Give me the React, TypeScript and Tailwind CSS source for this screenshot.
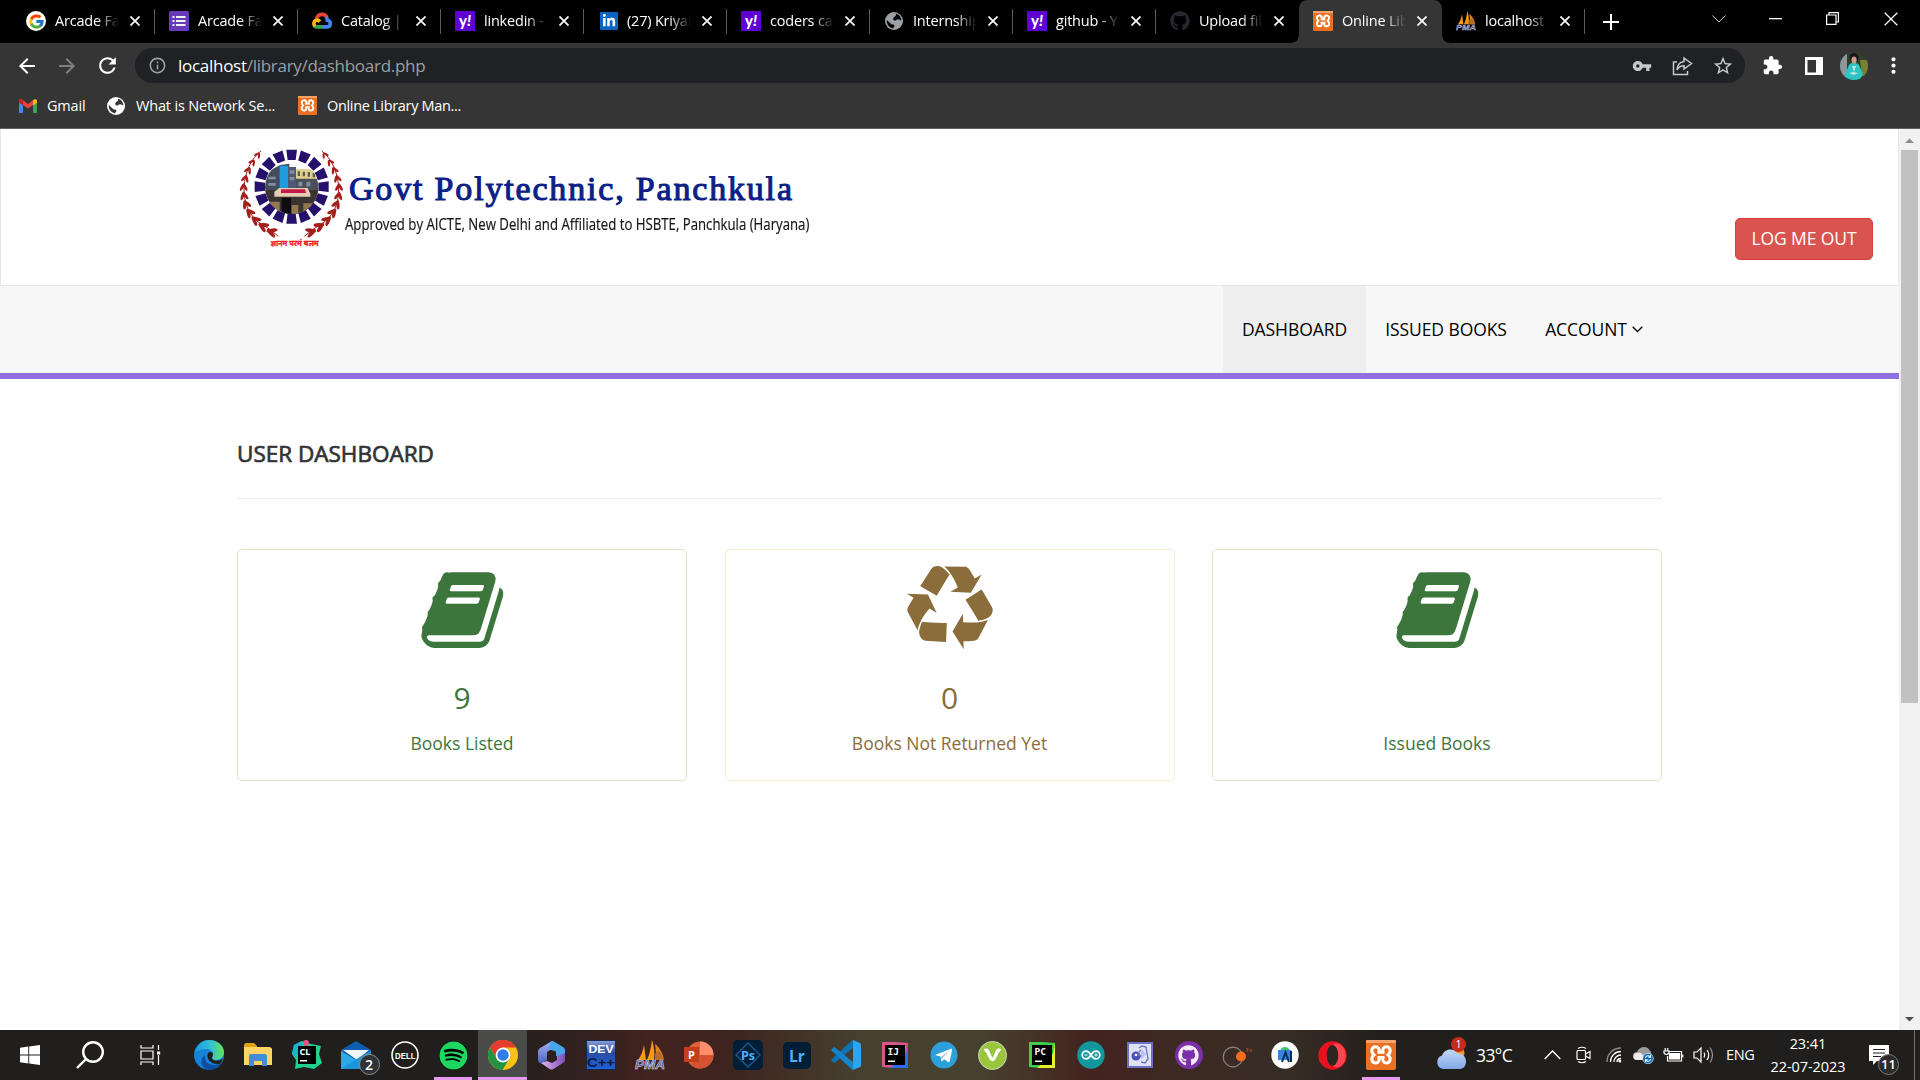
import React, { type ReactNode } from "react";
import {
  MdArrowBack,
  MdArrowForward,
  MdRefresh,
  MdInfoOutline,
  MdVpnKey,
  MdStarBorder,
  MdExtension,
  MdMoreVert,
} from "react-icons/md";
import { FaGithub, FaLinkedinIn, FaSpotify } from "react-icons/fa";
import { FcGoogle } from "react-icons/fc";

/* ---------- shared drawings ---------- */

function Xampp({ size }: { size: number }) {
  return (
    <svg width={size} height={size} viewBox="0 0 30 30">
      <rect width="30" height="30" rx="2" fill="#ea7023" />
      <rect width="30" height="3" rx="1" fill="#f6a36e" />
      <g fill="none" stroke="#fff" strokeWidth="3">
        <path d="M13 12.500C14 8.500 12 6.700 9.800 6.700 5.500 6.700 4.300 11.500 8 14.800 4.300 18 5.500 23 9.800 23c2.200 0 4.200-2 3.200-6" />
        <path d="M17 12.500C16 8.500 18 6.700 20.200 6.700c4.300 0 5.500 4.800 1.800 8.100 3.700 3.200 2.500 8.200-1.800 8.200-2.200 0-4.200-2-3.200-6" />
        <path d="M11.500 12.500h7M11.500 17.300h7" strokeWidth="2.600" />
      </g>
    </svg>
  );
}

function Globe({ size, color, land }: { size: number; color: string; land: string }) {
  return (
    <svg width={size} height={size} viewBox="0 0 20 20">
      <circle cx="10" cy="10" r="10" fill={color} />
      <path d="M12 1.800c3.800 1 6 4.200 6.200 7.700-1.700-.2-2.200-1.500-3.700-1.500-1.800 0-2 1.500-3.500 1.500S8.500 8 9.500 6.500 13 5 12 1.800zM2 9l5 4.500c1.500.5 3.500 0 3.500 1.700 0 1.300-1.500 1.300-1.300 3C5 18 1.500 14 2 9z" fill={land} />
    </svg>
  );
}

function Pma({ size }: { size: number }) {
  return (
    <svg width={size} height={size} viewBox="0 0 30 30">
      <path d="M3 20c3-4 5-9 6-15l2 15zM12 20c3-7 4-13 5-20 2 6 3 13 2 20z" fill="#f89c0e" />
      <path d="M20 20c1-5 1-10 0-16 5 4 8 10 9 16z" fill="#e0801d" />
      <path d="M20 14l3-3 3 2 3 7h-9z" fill="#b86b2b" />
      <text x="0" y="29" textLength="30" lengthAdjust="spacingAndGlyphs" fontSize="12" fontWeight="700" fontStyle="italic" fontFamily="Liberation Sans, sans-serif" fill="#4f5c98" stroke="#d9dcf0" strokeWidth="0.500">
        PMA
      </text>
    </svg>
  );
}

function Yahoo() {
  return (
    <span className="flex h-5 w-5 items-center justify-center bg-[#5f01d1] pb-0.5 font-['Lato',sans-serif] text-[15px] font-black leading-none text-white">
      <span>y</span>
      <span className="italic">!</span>
    </span>
  );
}

function FormsIcon() {
  return (
    <svg width="20" height="20" viewBox="0 0 20 20">
      <rect width="20" height="20" rx="1.500" fill="#673ab7" />
      <path d="M3.500 5h2v2h-2zM7 5h9.500v2H7zM3.500 9h2v2h-2zM7 9h9.500v2H7zM3.500 13h2v2h-2zM7 13h9.500v2H7z" fill="#f1f1f1" />
    </svg>
  );
}

function CloudIcon() {
  return (
    <svg width="20" height="20" viewBox="0 0 20 20" fill="none" strokeWidth="3.600">
      <path d="M4.500 8C5.500 4.500 8 3.400 10 3.400c2 0 4 1 5 3.200" stroke="#ea4335" />
      <path d="M14 6c1 1 1.300 2 1.300 3.200 2 .4 3 1.800 3 3.300 0 2-1.300 3.400-3.500 3.400H10" stroke="#4285f4" />
      <path d="M10.500 15.900H5.200c-1 0-2-.4-2.600-1" stroke="#34a853" />
      <path d="M3 15.200C1.400 13.500 1.400 11 3.500 9.600 5 8.800 6.800 9.200 7.800 10.600" stroke="#fbbc05" />
    </svg>
  );
}

function Badge({ className, children }: { className: string; children: ReactNode }) {
  return (
    <span className={`absolute flex items-center justify-center rounded-full leading-none ${className}`}>{children}</span>
  );
}

/* ---------- browser tabs ---------- */

type TabData = { icon: ReactNode; title: string; active?: boolean };

const tabs: TabData[] = [
  { icon: <span className="flex h-5 w-5 items-center justify-center rounded-full bg-white"><FcGoogle size={17} /></span>, title: "Arcade Facilitator" },
  { icon: <FormsIcon />, title: "Arcade Facilitator" },
  { icon: <CloudIcon />, title: "Catalog | Google" },
  { icon: <Yahoo />, title: "linkedin - Yahoo" },
  { icon: <span className="ml-0.5 flex h-[18px] w-[18px] items-center justify-center rounded-[1px] bg-[#0a66c2] text-white"><FaLinkedinIn size={14} /></span>, title: "(27) Kriyanshi" },
  { icon: <Yahoo />, title: "coders cave" },
  { icon: <Globe size={18} color="#9aa0a6" land="#000" />, title: "Internship" },
  { icon: <Yahoo />, title: "github - Yahoo" },
  { icon: <FaGithub size={20} className="text-[#24292f]" />, title: "Upload files" },
  { icon: <Xampp size={20} />, title: "Online Library", active: true },
  { icon: <Pma size={20} />, title: "localhost / " },
];

function Cross({ size, width }: { size: number; width: number }) {
  return (
    <svg width={size} height={size} viewBox="0 0 10 10" stroke="#fff" strokeWidth={width}>
      <path d="M.5.5l9 9M9.500.5l-9 9" />
    </svg>
  );
}

function Tab({ tab, divider }: { tab: TabData; divider: boolean }) {
  return (
    <div className="relative flex h-[43px] w-[143px] shrink-0 items-center">
      {tab.active && (
        <svg className="absolute -left-2.5 top-0" width="163" height="43" viewBox="0 0 163 43">
          <path d="M0 43c7 0 10-3 10-10V10C10 3 13 0 20 0h123c7 0 10 3 10 10v23c0 7 3 10 10 10z" fill="#353535" />
        </svg>
      )}
      <div className="relative flex w-full items-center pb-px pl-[14px]">
        <div className="flex h-5 w-5 shrink-0 items-center justify-center">{tab.icon}</div>
        <div className="ml-[9px] h-6 w-[64px] overflow-hidden whitespace-nowrap text-[14.500px] leading-6 tracking-[-0.200px] text-white [mask-image:linear-gradient(to_right,#000_66%,transparent)]">
          {tab.title}
        </div>
        <div className="ml-[11px] flex">
          <Cross size={10} width={1.700} />
        </div>
      </div>
      {divider && <div className="absolute right-0 top-[9px] h-[25px] w-px bg-[#5a5a5a]" />}
    </div>
  );
}

function TabStrip() {
  return (
    <div className="flex h-[43px] items-center bg-black pl-3">
      {tabs.map((t, i) => (
        <Tab key={i} tab={t} divider={!t.active && !tabs[i + 1]?.active} />
      ))}
      <svg className="ml-[18px]" width="16" height="16" viewBox="0 0 16 16" stroke="#fff" strokeWidth="2">
        <path d="M8 0v16M0 8h16" />
      </svg>
      <div className="ml-auto flex items-center pb-1.5 pr-[22px]">
        <svg width="14" height="8" viewBox="0 0 14 8" fill="none" stroke="#ccc">
          <path d="M.5.5L7 7 13.500.5" />
        </svg>
        <svg className="ml-[43px]" width="13" height="2" viewBox="0 0 13 2">
          <path d="M0 0h13v1.300H0z" fill="#fff" />
        </svg>
        <svg className="ml-[44px]" width="13" height="13" viewBox="0 0 13 13" fill="none" stroke="#fff" strokeWidth="1.200">
          <path d="M.6 3h9.400v9.400H.6zM3 3V.6h9.400V10H10" />
        </svg>
        <div className="ml-[45px] flex">
          <Cross size={14} width={0.900} />
        </div>
      </div>
    </div>
  );
}

function AddressBar() {
  return (
    <div className="flex h-[45px] items-center bg-[#353535] pl-[15px]">
      <MdArrowBack size={24} className="text-white" />
      <MdArrowForward size={24} className="ml-4 text-[#808080]" />
      <MdRefresh size={25} className="ml-4 text-white" />
      <div className="ml-[15px] flex h-[35px] w-[1610px] items-center rounded-full bg-[#202124] pl-[13px] pr-[11px]">
        <MdInfoOutline size={19} className="text-[#9aa0a6]" />
        <div className="ml-[11px] text-[17px] tracking-[-0.280px] text-[#9aa0a6]">
          <span className="text-white">localhost</span>/library/dashboard.php
        </div>
        <div className="ml-auto flex items-center text-[#c6c8ca]">
          <MdVpnKey size={20} />
          <svg className="ml-5" width="21" height="20" viewBox="0 0 21 20" fill="none" stroke="currentColor" strokeWidth="1.500">
            <path d="M5 6H1.500v12.500h14V15M12 2l7.500 5.500L12 13V9.800C9 9.800 6.500 11 5 14c.3-4.500 2.800-8 7-8.500z" />
          </svg>
          <MdStarBorder size={22} className="ml-[19px]" />
        </div>
      </div>
      <MdExtension size={21} className="ml-[17px] text-white" />
      <svg className="ml-[22px]" width="18" height="18" viewBox="0 0 18 18">
        <path fill="#fff" fillRule="evenodd" d="M0 0h18v18H0zM2.500 3v12.500H11V3z" />
      </svg>
      <svg className="ml-[17px] rounded-full" width="28" height="28" viewBox="0 0 28 28">
        <rect width="28" height="28" fill="#30402a" />
        <path d="M0 0h7v28H0z" fill="#8f979a" />
        <path d="M20 8h8v16h-6z" fill="#77812f" />
        <path d="M9 13c2-3 8-3 10 0l4 9-3 6H6l-1-6z" fill="#2cc4c4" />
        <path d="M12 14l2 6 2-6zM9 21l4-1 5 1-4 2z" fill="#bfe8df" />
        <ellipse cx="14" cy="6" rx="4.500" ry="5" fill="#17161a" />
        <ellipse cx="14" cy="8" rx="2.600" ry="3.600" fill="#d09a82" />
      </svg>
      <MdMoreVert size={25} className="ml-[13px] text-white" />
    </div>
  );
}

function Bookmarks() {
  return (
    <div className="flex h-[41px] items-center border-b border-[#5f6163] bg-[#353535] pb-[5px] pl-[19px] text-[14.500px] tracking-[-0.200px] text-white">
      <svg width="18" height="14" viewBox="0 0 18 14">
        <path d="M0 2v12h4V5.500z" fill="#4285f4" />
        <path d="M18 2v12h-4V5.500z" fill="#34a853" />
        <path d="M0 1.500C0 .5 1.500-.5 3 .6L9 5l6-4.400L14 6 9 9.500 4 6z" fill="#ea4335" />
        <path d="M14 1.300C16-.5 18 .3 18 2v1.500L14 6.500z" fill="#fbbc04" />
        <path d="M0 2C0 .5 2-.4 4 1.300v5.200L0 3.500z" fill="#c5221f" />
      </svg>
      <span className="ml-2.5 w-[38px]">Gmail</span>
      <span className="ml-[22px]">
        <Globe size={18} color="#fff" land="#353535" />
      </span>
      <span className="ml-[11px] w-[142px] whitespace-nowrap tracking-[-0.160px]">What is Network Se...</span>
      <span className="ml-5">
        <Xampp size={19} />
      </span>
      <span className="ml-[10px] tracking-[-0.320px]">Online Library Man...</span>
    </div>
  );
}

/* ---------- library page ---------- */

const leafPoints = [
  [66, 34, -55], [50, 56, -55], [38, 80, -65], [30, 105, -75], [26, 131, -90],
  [28, 157, -100], [35, 182, -115], [47, 206, -130], [65, 228, -140], [88, 246, -150], [114, 262, -160],
];

function Laurel() {
  return (
    <g fill="#a5201c">
      {leafPoints.map(([x, y, a], i) => (
        <g key={i} transform={`translate(${x} ${y}) rotate(${a})`}>
          <ellipse cx="2" cy="-6" rx={9 + i * 0.8} ry={3.2 + i * 0.28} transform="rotate(28)" />
          <ellipse cx="2" cy="6" rx={9 + i * 0.8} ry={3.2 + i * 0.28} transform="rotate(-28)" />
        </g>
      ))}
      <path d="M78 18C20 60 0 190 80 238q30 16 50 36" fill="none" stroke="#a5201c" strokeWidth="3" />
    </g>
  );
}

function Crest() {
  return (
    <svg className="ml-[-2px] mt-[16px] shrink-0" width="115" height="105" viewBox="0 0 345 315">
      <clipPath id="crest-disc">
        <circle cx="170" cy="127" r="80" />
      </clipPath>
      {Array.from({ length: 16 }, (_, i) => (
        <path key={i} d="M154 14h32l-4 31h-24z" fill="#25106b" transform={`rotate(${i * 22.5} 170 125)`} />
      ))}
      <g clipPath="url(#crest-disc)">
        <rect x="88" y="40" width="165" height="170" fill="#fff" />
        <path d="M90 85l45-25 28-4v80H90z" fill="#454c59" />
        <path d="M134 62h25v70h-25z" fill="#239be0" />
        <path d="M159 66h24v64h-24z" fill="#4e5a73" />
        <path d="M183 72h72v30h-72z" fill="#e0cf91" />
        <path d="M183 101h72v110h-72z" fill="#4b4f58" />
        <path d="M188 79h7v14h-7zM203 80h7v14h-7zM218 81h7v14h-7zM233 83h7v14h-7z" fill="#59604d" />
        <path d="M164 76h14v10h-14zM164 96h14v10h-14zM190 110h12v14h-12zM214 110h12v14h-12zM100 95h22v8h-22zM100 114h22v8h-22z" fill="#818da3" />
        <path d="M88 135h167v80H88z" fill="#3a3331" />
        <path d="M118 140l15-11h85l8 17v9H118z" fill="#e5cdb3" />
        <path d="M138 133h72l3 11h-75z" fill="#c21948" />
        <path d="M100 170h34v36h-34zM170 180h20v26h-20zM205 175h30v30h-30z" fill="#94784f" />
        <path d="M140 158h28v50h-28z" fill="#0d0d10" />
      </g>
      <Laurel />
      <g transform="translate(338 0) scale(-1 1)">
        <Laurel />
      </g>
      <text x="107" y="304" textLength="144" lengthAdjust="spacingAndGlyphs" fontSize="23" fontWeight="700" fontFamily="'Noto Sans Devanagari', 'Noto Sans', sans-serif" fill="#f01820" stroke="#f01820" strokeWidth="0.800">
        ज्ञानम परमं बलम
      </text>
    </svg>
  );
}

function SiteHeader() {
  return (
    <header className="flex h-[157px] justify-between border border-t-0 border-[#e7e7e7] bg-white">
      <div className="flex pl-[236px]">
        <Crest />
        <div className="pt-[38px]">
          <div className="ml-[-1px] whitespace-nowrap font-['Liberation_Serif',serif] text-[34px] leading-[44px] tracking-[1.820px] text-[#0c1f85] [-webkit-text-stroke:1.100px_#0c1f85]">
            Govt Polytechnic, Panchkula
          </div>
          <div className="ml-[-5px] mt-px w-[580px] origin-left scale-x-[0.852] whitespace-nowrap text-[15.500px] leading-6 text-[#161616] [-webkit-text-stroke:0.200px_#161616]">
            Approved by AICTE, New Delhi and Affiliated to HSBTE, Panchkula (Haryana)
          </div>
        </div>
      </div>
      <button className="mr-[25px] mt-[89px] h-[42px] w-[138px] rounded-[5px] border border-[#d43f3a] bg-[#d9534f] text-[17.500px] leading-none tracking-[-0.100px] text-white">
        LOG ME OUT
      </button>
    </header>
  );
}

function MainMenu() {
  return (
    <nav className="flex h-[93px] justify-end border-b-[6px] border-[#9170e4] bg-[#f7f7f7] pr-[237px] text-[17.500px] tracking-[-0.080px] text-black">
      <a className="flex w-[143px] items-center justify-center bg-[#eee]">DASHBOARD</a>
      <a className="flex w-[160px] items-center justify-center">ISSUED BOOKS</a>
      <a className="flex w-[136px] items-center justify-center">
        ACCOUNT
        <svg className="ml-[5px]" width="11" height="7" viewBox="0 0 11 7" fill="none" stroke="#000" strokeWidth="1.300">
          <path d="M.7.7l4.800 4.800L10.300.7" />
        </svg>
      </a>
    </nav>
  );
}

const bookPath =
  "M1703 478q40 57 18 129l-275 906q-19 64-76.500 107.500t-122.500 43.500h-923q-77 0-148.500-53.500t-99.500-131.500q-24-67-2-127 0-4 3-27t4-37q1-8-3-21.500t-3-19.500q2-11 8-21t16.500-23.500 16.500-23.500q23-38 45-91.500t30-91.500q3-10 .5-30t-.5-28q3-11 17-28t17-23q21-36 42-92t25-90q1-9-2.500-32t.5-28q4-13 22-30.500t22-22.500q19-26 42.500-84.500t27.500-96.500q1-8-3-25.500t-2-26.500q2-8 9-18t18-23 17-21q8-12 16.500-30.500t15-35 16-36 19.500-32 26.500-23.500 36-11.500 47.500 5.500l-1 3q38-9 51-9h761q74 0 114 56t18 130l-274 906q-36 119-71.500 153.500t-128.500 34.500h-869q-27 0-38 15-11 16-1 43 24 70 144 70h923q29 0 56-15.500t35-41.500l300-987q7-22 5-57 38 15 59 43zm-1064 2q-4 13 2 22.500t20 9.500h608q13 0 25.500-9.500t16.500-22.500l21-64q4-13-2-22.500t-20-9.500h-608q-13 0-25.500 9.500t-16.500 22.500zm-83 256q-4 13 2 22.500t20 9.500h608q13 0 25.500-9.500t16.500-22.500l21-64q4-13-2-22.500t-20-9.500h-608q-13 0-25.500 9.500t-16.500 22.500z";

const recyclePath =
  "M836 1169l-15 368-2 22-420-29q-36-3-67-31.500t-47-65.500q-11-27-14.500-55t4-65 12-55 21.500-64 19-53q78 12 509 28zm-387-586l180 379-147-92q-63 72-111.500 144.500t-72.500 125-39.500 94.500-18.500 63l-4 21-190-357q-17-26-18-56t6-47l8-18q35-63 114-188l-140-86zm1231 517l-188 359q-12 29-36.500 46.500t-43.500 20.500l-18 4q-71 7-219 12l8 164-230-367 211-362 7 173q170 16 283 5t170-33zm-785-924q-47 63-265 435l-317-187-19-12 225-356q20-31 60-45t80-10q24 2 48.500 12t42 21 41.500 33 36 34.500 36 39.500 32 35zm655 307l212 363q18 37 12.500 76t-27.500 74q-13 20-33 37t-38 28-48.500 22-47 16-51.500 14-46 12q-34-72-265-436l313-195zm-143-226l142-83-220 373-419-20 151-86q-34-89-75-166t-75.500-123.500-64.500-80-47-46.500l-17-13 405 1q31-3 58 10.500t39 28.500l11 15q39 61 112 190z";

const book = { d: bookPath, viewBox: "-6 0 1776 1776" };
const recycle = { d: recyclePath, viewBox: "0 0 1792 1792" };

type CardProps = { tone: string; icon: { d: string; viewBox: string }; count: string; label: string };

function StatCard({ tone, icon, count, label }: CardProps) {
  return (
    <div className={`flex h-[232px] flex-col items-center rounded-[5px] border bg-white pt-[16px] ${tone}`}>
      <svg width="87.500" height="87.500" viewBox={icon.viewBox} fill="currentColor">
        <path d={icon.d} />
      </svg>
      <div className="mt-[24px] h-[40px] text-[30px] leading-[40px]">{count}</div>
      <div className="mt-[13px] text-[17.500px] leading-6">{label}</div>
    </div>
  );
}

function Dashboard() {
  return (
    <main className="px-[237px]">
      <h4 className="pt-[60px] text-[22.500px] leading-[30px] text-[#333] [-webkit-text-stroke:0.700px_#333]">USER DASHBOARD</h4>
      <hr className="mt-[29px] border-[#eee]" />
      <div className="mt-[50px] grid grid-cols-3 gap-[37.500px]">
        <StatCard tone="border-[#d6e9c6] text-[#3c763d]" icon={book} count="9" label="Books Listed" />
        <StatCard tone="border-[#faebcc] text-[#8a6d3b]" icon={recycle} count="0" label="Books Not Returned Yet" />
        <StatCard tone="border-[#d6e9c6] text-[#3c763d]" icon={book} count="" label="Issued Books" />
      </div>
    </main>
  );
}

function ScrollBar() {
  return (
    <div className="flex w-[21px] flex-col items-center justify-between bg-[#f1f1f1]">
      <svg width="21" height="21" viewBox="0 0 21 21">
        <path d="M6 14l4.500-4.500L15 14z" fill="#8b8b8b" />
      </svg>
      <div className="w-[17px] flex-1">
        <div className="h-[553px] bg-[#c1c1c1]" />
      </div>
      <svg width="21" height="21" viewBox="0 0 21 21">
        <path d="M6 8l4.500 4.500L15 8z" fill="#505050" />
      </svg>
    </div>
  );
}

/* ---------- taskbar ---------- */

function Jet({ label, a, b }: { label: string; a: string; b: string }) {
  return (
    <svg width="26" height="26" viewBox="0 0 26 26">
      <path d="M0 0h14l12 1v12l-1 13H12L0 25z" fill={a} />
      <path d="M26 1v25H8l16-14z" fill={b} />
      <rect x="3" y="3" width="20" height="20" fill="#000" />
      <text x="5.500" y="12.500" fontSize="9.500" fontWeight="700" fontFamily="DejaVu Sans Mono, monospace" fill="#fff">
        {label}
      </text>
      <path d="M6 18.500h7v1.500H6z" fill="#fff" />
    </svg>
  );
}

type TaskData = { el: ReactNode; state?: "open" | "active"; narrow?: boolean };

const tasks: TaskData[] = [
  {
    el: (
      <svg width="30" height="30" viewBox="0 0 30 30">
        <defs>
          <linearGradient id="edge-top" x1="0" x2="1">
            <stop offset="0" stopColor="#1b9de2" />
            <stop offset=".55" stopColor="#35c1d5" />
            <stop offset="1" stopColor="#63e552" />
          </linearGradient>
        </defs>
        <circle cx="15" cy="15" r="15" fill="#1583d8" />
        <path d="M1 12C3 4 9 0 15 0c9 0 15 6 15 12 0 5-4 8-8 8-3 0-4-1-4-2 0-1 1-2 1-4 0-3-3-5-7-5-5 0-9 2-11 3z" fill="url(#edge-top)" />
        <path d="M11 15c-1 8 6 13 16 8-3 5-8 7-12 7-7-1-11-9-4-15z" fill="#0d4f9e" />
        <path d="M14 13c2-2 5-1 5 1s-1 3-1 4c0 2 3 3 6 2.500 3 0 4-1.500 4.500-1.500.8 0-1 4-3 5-8 1-14-5-11.500-11z" fill="#201f1d" />
      </svg>
    ),
  },
  {
    el: (
      <svg width="28" height="24" viewBox="0 0 28 24">
        <path d="M0 2c0-1 1-2 2-2h8l3 3v5H0z" fill="#e0a010" />
        <path d="M0 4h25c1.500 0 3 1 3 2v16H0z" fill="#fdd366" />
        <path d="M5 13c0-1 1-2 2-2h14c1 0 2 1 2 2v10h-5v-5h-8v5H5z" fill="#3f8fd8" />
      </svg>
    ),
  },
  {
    el: (
      <svg width="30" height="30" viewBox="0 0 30 30">
        <path d="M2 5l8-4 9 3 10 2-2 8 3 9-8 6-10-2-9 2 1-9-4-6z" fill="#1fd18c" />
        <path d="M2 5l8-4v7l-6 10-4-5z" fill="#19b7cf" />
        <circle cx="14" cy="3" r="3" fill="#ef4f8b" />
        <rect x="6" y="6" width="18" height="18" fill="#000" />
        <text x="7.500" y="15" fontSize="9" fontWeight="700" fontFamily="Noto Sans, sans-serif" fill="#fff">CL</text>
        <path d="M8 20h7v1.500H8z" fill="#fff" />
      </svg>
    ),
  },
  {
    el: (
      <div className="relative">
        <svg width="30" height="28" viewBox="0 0 30 28">
          <path d="M0 9L15 0l15 9v19H0z" fill="#0e5db0" />
          <path d="M2 9h26L16 19z" fill="#f1f3f5" />
          <path d="M0 10l15 9 15-9v18H0z" fill="#29abe8" />
          <path d="M0 28L22 14l8-4v18z" fill="#1d95dc" />
        </svg>
        <Badge className="left-[18px] top-[13px] h-[21px] w-[21px] border border-[#8d8d8d] bg-[#303336] text-[14px] font-semibold text-white">2</Badge>
      </div>
    ),
  },
  {
    el: (
      <svg width="28" height="28" viewBox="0 0 28 28">
        <circle cx="14" cy="14" r="13" fill="none" stroke="#fff" strokeWidth="1.600" />
        <text x="4" y="17.500" textLength="20.500" lengthAdjust="spacingAndGlyphs" fontSize="9.500" fontWeight="700" fontFamily="Liberation Sans, sans-serif" fill="#fff">
          DELL
        </text>
      </svg>
    ),
  },
  { el: <span className="flex rounded-full bg-black"><FaSpotify size={29} className="text-[#1ed760]" /></span>, state: "open" },
  {
    el: (
      <svg width="30" height="30" viewBox="0 0 30 30">
        <circle cx="15" cy="15" r="15" fill="#fbc116" />
        <path d="M2 7.500A15 15 0 0 1 28 7.500H15L9 19z" fill="#e33b2e" />
        <path d="M2 7.500A15 15 0 0 0 14.500 30L21.500 18.500 9 19z" fill="#229342" />
        <circle cx="15" cy="15" r="7.400" fill="#fff" />
        <circle cx="15" cy="15" r="5.700" fill="#2f7de9" />
      </svg>
    ),
    state: "active",
  },
  {
    el: (
      <svg width="27" height="29" viewBox="0 0 27 29">
        <defs>
          <linearGradient id="m365-left" x1="0" x2="0" y1="0" y2="1">
            <stop offset="0" stopColor="#a9b4f2" />
            <stop offset="1" stopColor="#4d62c8" />
          </linearGradient>
          <linearGradient id="m365-base" x1="0" x2="1">
            <stop offset="0" stopColor="#e3b6ee" />
            <stop offset="1" stopColor="#7a4fb8" />
          </linearGradient>
        </defs>
        <path d="M14 0L3 6.500C1 7.500 0 9 0 11v8c0 2 2 4 4 3l5-3v-8l8-5z" fill="url(#m365-left)" />
        <path d="M13 0h2l10 6c1.500 1 2 2 2 3.500V18l-9-3v-4.500L10 8z" fill="#46a5ec" />
        <path d="M3 22l6-2 5 2 5-3v-4l8-3v7c0 1.500-1 2.500-2 3l-9.500 6c-1.500.8-2.500.8-4 0z" fill="url(#m365-base)" />
      </svg>
    ),
  },
  {
    el: (
      <svg width="30" height="30" viewBox="0 0 30 30">
        <defs>
          <linearGradient id="dev-bg" x1="0" x2="0" y1="0" y2="1">
            <stop offset="0" stopColor="#8aa2d8" />
            <stop offset=".4" stopColor="#2a4ba0" />
            <stop offset="1" stopColor="#1d63d8" />
          </linearGradient>
        </defs>
        <rect x=".5" y=".5" width="29" height="29" fill="url(#dev-bg)" stroke="#16294f" />
        <text x="2.500" y="12.500" textLength="25" lengthAdjust="spacingAndGlyphs" fontSize="11.500" fontWeight="700" fontFamily="Liberation Sans, sans-serif" fill="#fff">DEV</text>
        <text x="1" y="27" textLength="28" lengthAdjust="spacingAndGlyphs" fontSize="12.500" fontWeight="700" fontFamily="Liberation Sans, sans-serif" fill="#0a1a3a">C++</text>
      </svg>
    ),
  },
  { el: <Pma size={30} /> },
  {
    el: (
      <svg width="30" height="28" viewBox="0 0 30 28">
        <circle cx="16" cy="14" r="13.500" fill="#e0603c" />
        <path d="M16 .5A13.500 13.500 0 0 1 29.500 14H16z" fill="#ff8f6b" />
        <path d="M16 14h13.500A13.500 13.500 0 0 1 7 24z" fill="#d35230" />
        <rect x="0" y="6" width="15" height="15" rx="1" fill="#c43e1c" />
        <text x="4" y="18" fontSize="11" fontWeight="700" fontFamily="Open Sans, sans-serif" fill="#fff">P</text>
      </svg>
    ),
  },
  {
    el: (
      <svg width="30" height="30" viewBox="0 0 30 30">
        <rect width="30" height="30" rx="5" fill="#001e36" />
        <path d="M15 3l12 12-12 12L3 15z" fill="none" stroke="#1c5a8c" strokeWidth="1.300" />
        <text x="8" y="19.500" fontSize="12.500" fontWeight="700" fontFamily="Open Sans, sans-serif" fill="#4fb0ff">Ps</text>
      </svg>
    ),
  },
  {
    el: (
      <svg width="28" height="27" viewBox="0 0 28 27">
        <rect width="28" height="27" rx="5" fill="#001e36" />
        <text x="6" y="19.500" fontSize="15.500" fontWeight="700" fontFamily="Open Sans, sans-serif" fill="#4fb0ff">Lr</text>
      </svg>
    ),
  },
  {
    el: (
      <svg width="30" height="30" viewBox="0 0 30 30">
        <path d="M22 0v8L4 22.500c-.5.500-1 .4-1.500 0L.7 20.700c-.5-.5-.5-1 0-1.500L21 .5z" fill="#0f72b5" />
        <path d="M22 30v-8L4 7.500c-.5-.5-1-.4-1.500 0L.7 9.300c-.5.500-.5 1 0 1.500L21 29.500z" fill="#1285cc" />
        <path d="M22 0l7 3c.6.300 1 1 1 1.600v20.800c0 .7-.4 1.300-1 1.600L22 30z" fill="#2aa4f4" />
      </svg>
    ),
  },
  { el: <Jet label="IJ" a="#d9568a" b="#2f6bf2" /> },
  {
    el: (
      <svg width="28" height="28" viewBox="0 0 28 28">
        <circle cx="14" cy="14" r="13.500" fill="#2ba0da" />
        <path d="M5.500 13.800L21 7.800c.8-.3 1.300.2 1.100 1.100l-2.500 11.600c-.2.900-.8 1-1.500.6l-3.900-2.900-2 2c-.3.300-.7.200-.8-.2l-.9-4.500-4.900-1.300c-.7-.2-.6-.2-.1-.4z" fill="#fff" />
        <path d="M11 15.500l8.500-5.400-6.800 6.800-.8 3z" fill="#a8cde5" />
      </svg>
    ),
  },
  {
    el: (
      <svg width="29" height="29" viewBox="0 0 29 29">
        <circle cx="14.500" cy="14.500" r="14" fill="#9bc53d" stroke="#cfd8b8" />
        <path d="M6.500 9.500q2-.8 3 .5c1.500 3 3 8.500 5 8.500s3.500-5.500 5-8.500q1-1.300 3-.5" fill="none" stroke="#fff" strokeWidth="3.400" strokeLinejoin="round" />
      </svg>
    ),
  },
  { el: <Jet label="PC" a="#3ecf4c" b="#e8ee2a" /> },
  {
    el: (
      <svg width="28" height="28" viewBox="0 0 28 28">
        <circle cx="14" cy="14" r="13.700" fill="#12979d" />
        <path d="M14 14c-1.500-2.500-3-3.800-5-3.800a3.800 3.800 0 0 0 0 7.600c2 0 3.500-1.300 5-3.800s3-3.800 5-3.800a3.800 3.800 0 0 1 0 7.600c-2 0-3.500-1.300-5-3.800z" fill="none" stroke="#fff" strokeWidth="1.800" />
        <path d="M7.500 14h3M17.500 14h3M19 12.500v3" stroke="#fff" />
      </svg>
    ),
  },
  {
    el: (
      <svg width="26" height="26" viewBox="0 0 26 26">
        <rect x="1" y="1" width="24" height="24" fill="#dfe2f4" stroke="#6a70c4" strokeWidth="2" />
        <circle cx="9" cy="14" r="4.500" fill="#4a50b8" />
        <path d="M12 6l3-2 4 1 2 12-3 4-4-1M14 8l-3 3 4 5" fill="none" stroke="#6b74c8" strokeWidth="1.300" />
        <path d="M14 7l5 5-5 5z" fill="#b9c0ec" />
        <circle cx="9" cy="13" r="1.300" fill="#fff" />
      </svg>
    ),
  },
  { el: <span className="flex h-7 w-7 items-center justify-center rounded-full bg-[#7b2fa8]"><FaGithub size={21} className="text-[#f4ecf8]" /></span> },
  {
    narrow: true,
    el: (
      <svg width="32" height="26" viewBox="0 0 32 26">
        <circle cx="12" cy="15" r="9.800" fill="none" stroke="#8a8887" strokeWidth="1.200" />
        <circle cx="20" cy="14.500" r="5" fill="#f76b1c" />
        <text x="24" y="9.500" fontSize="6.500" fontFamily="Liberation Serif, serif" fill="#d0592a">3's</text>
      </svg>
    ),
  },
  {
    narrow: true,
    el: (
      <svg width="28" height="28" viewBox="0 0 28 28">
        <circle cx="14" cy="14" r="13.700" fill="#fff" />
        <path d="M9.500 9c1-4 8-4 9 0z" fill="#35c56f" />
        <path d="M7 9h13v10H7z" fill="#3b82e8" />
        <path d="M11 21l3.500-9.500L18 21M20 10v11" stroke="#083042" strokeWidth="2" fill="none" />
      </svg>
    ),
  },
  {
    narrow: true,
    el: (
      <svg width="29" height="29" viewBox="0 0 29 29">
        <path fillRule="evenodd" fill="#e8121f" d="M14.500.3a14.200 14.200 0 1 0 0 28.400 14.200 14.200 0 1 0 0-28.400zm0 3.800c3.300 0 5.800 4.600 5.800 10.400s-2.500 10.400-5.800 10.400-5.800-4.600-5.800-10.400S11.200 4.100 14.500 4.100z" />
        <path d="M14.500 4.100C17 .8 23 3 24 5a14 14 0 0 1 0 19c-3 3-7 2.500-9.500.9 3.300 0 5.800-4.600 5.800-10.400S17.800 4.100 14.500 4.100z" fill="#ff4650" />
      </svg>
    ),
  },
  { narrow: true, el: <Xampp size={30} />, state: "open" },
];

function TaskButton({ task }: { task: TaskData }) {
  return (
    <div
      className={`relative flex h-[50px] items-center justify-center ${task.narrow ? "w-[47.900px]" : "w-[49px]"} ${
        task.state === "active" ? "bg-[#4b4b4a]" : ""
      }`}
    >
      {task.el}
      {task.state === "open" && <div className="absolute bottom-0 left-[5px] h-[3px] w-[38px] bg-[#e59aee]" />}
      {task.state === "active" && <div className="absolute bottom-0 left-0 h-[3px] w-full bg-[#e59aee]" />}
    </div>
  );
}

function Tray() {
  return (
    <div className="ml-auto flex h-full shrink-0 items-center text-white">
      <div className="relative mt-[5px]">
        <svg width="31" height="22" viewBox="0 0 31 22">
          <defs>
            <linearGradient id="weather" x1="0" x2="0" y1="0" y2="1">
              <stop offset="0" stopColor="#c3d8f8" />
              <stop offset="1" stopColor="#83a8e8" />
            </linearGradient>
          </defs>
          <circle cx="23" cy="6" r="5.500" fill="#f09a1e" />
          <path d="M7 22a7 7 0 0 1-1-13.500C8 2 17 0 21 6c5 0 9 3.500 9 8.500S27 22 23 22z" fill="url(#weather)" />
        </svg>
        <Badge className="left-[15px] top-[-10px] h-[15px] w-[15px] bg-[#c42b1c] text-[10px]">1</Badge>
      </div>
      <span className="ml-[9px] w-[38px] text-[17.500px] tracking-[-0.600px]">33°C</span>
      <svg className="ml-[30px]" width="17" height="10" viewBox="0 0 17 10" fill="none" stroke="#fff" strokeWidth="1.300">
        <path d="M.7 9l7.800-8 7.800 8" />
      </svg>
      <svg className="ml-[15px]" width="15" height="18" viewBox="0 0 15 18" fill="none" stroke="#fff" strokeWidth="1.200">
        <rect x="1" y="4.500" width="8.500" height="9" rx="1" />
        <path d="M9.500 8L14 5.500v7L9.500 10M2 2.500q4-2.500 8 0M2 15.500q4 2.500 8 0" />
      </svg>
      <svg className="ml-[15px]" width="16" height="16" viewBox="0 0 16 16" fill="none" strokeWidth="1.300">
        <path d="M1 15C1 7 7 1 15 1" stroke="#8c8c8c" />
        <path d="M4.500 15C4.500 9 9 4.500 15 4.500M8 15c0-4 3-7 7-7" stroke="#fff" />
        <path d="M11 15c0-2 1.500-3.500 4-3.500" stroke="#fff" />
        <circle cx="13.800" cy="14" r="1.500" fill="#fff" />
      </svg>
      <svg className="ml-[11px]" width="21" height="18" viewBox="0 0 21 18">
        <path d="M4 14a4 4 0 0 1 0-8C6 0 15-1 17 5c2 1 2 7 0 9z" fill="#9b9b9b" />
        <path d="M3.500 14a3.500 3.500 0 0 1 1-7c3-1 6 1 6 4l2 3z" fill="#ececec" />
        <circle cx="15" cy="12.500" r="5.300" fill="#0f6cbd" stroke="#fff" strokeWidth=".6" />
        <path d="M12.300 11.800c.7-2.500 4.200-2.800 5.200-.6M17.700 13.200c-.7 2.500-4.200 2.800-5.200.6M17.500 9v2.300h-2.200M12.500 16v-2.300h2.200" fill="none" stroke="#fff" strokeWidth="1.100" />
      </svg>
      <svg className="ml-[9px]" width="21" height="14" viewBox="0 0 21 14" fill="none" stroke="#fff" strokeWidth="1.200">
        <path d="M6 3.500h12.500v9.500H4.500V8" />
        <path d="M6.500 5.500h10V11h-10z" fill="#fff" />
        <path d="M19.800 6.500v3M1 3h5v2q-2.500 3-5 0zM2.200 0v3M4.700 0v3" />
      </svg>
      <svg className="ml-[9px]" width="21" height="18" viewBox="0 0 21 18" fill="none" stroke="#fff" strokeWidth="1.200">
        <path d="M1 6h3l4-4v14l-4-4H1z" />
        <path d="M11 6.500q1.500 2.500 0 5M14 4q3.500 5 0 10" />
        <path d="M17 1.500q5 7.500 0 15" stroke="#9a9a9a" />
      </svg>
      <span className="ml-[12px] w-[29px] text-[14.500px] tracking-[-0.400px]">ENG</span>
      <div className="ml-[14px] w-[78px] whitespace-nowrap text-center text-[14.500px] leading-[23px] tracking-[-0.050px]">
        <div>23:41</div>
        <div>22-07-2023</div>
      </div>
      <div className="relative ml-[22px]">
        <svg width="21" height="21" viewBox="0 0 21 21">
          <path d="M0 0h20v16H8l-4 4v-4H0z" fill="#fff" />
          <path d="M4 4.500h12M4 8h12M4 11.500h8" stroke="#222" strokeWidth="1.200" />
        </svg>
        <Badge className="left-[9px] top-[9px] h-[21px] w-[21px] border border-[#7d7d7d] bg-[#2b2b2b] text-[13px] font-semibold">11</Badge>
      </div>
      <div className="ml-[24px] mr-[5px] h-full w-px bg-[#6d6d6c]" />
    </div>
  );
}

function Taskbar() {
  return (
    <footer className="flex h-[50px] items-center bg-[linear-gradient(to_right,#201f1d_0px,#201f1d_500px,#42231f_650px,#3d241f_730px,#46402f_860px,#46412f_980px,#43231f_1090px,#3c2a23_1190px,#362c24_1290px,#231f1c_1380px,#201f1d_1500px,#201f1d_100%)]">
      <div className="flex w-[60px] justify-center">
        <svg width="20" height="20" viewBox="0 0 20 20" fill="#fff">
          <path d="M0 2.800l8.300-1.200v8H0zM9.200 1.500L20 0v9.600H9.200zM0 10.500h8.300v8L0 17.300zM9.200 10.500H20V20L9.200 18.600z" />
        </svg>
      </div>
      <div className="flex w-[60px] justify-center">
        <svg width="28" height="28" viewBox="0 0 28 28" fill="none" stroke="#fff" strokeWidth="2.400">
          <circle cx="17" cy="11" r="9.800" />
          <path d="M10 18l-9 9" />
        </svg>
      </div>
      <div className="flex w-[60px] justify-center">
        <svg width="21" height="20" viewBox="0 0 21 20" fill="none" stroke="#fff" strokeWidth="1.200">
          <path d="M1 0v3h12V0M1 6h12v8H1zM1 20v-3h12v3M18.500 0v5M18.500 10v10" />
          <path d="M17 6.500h3.200v3H17z" fill="#fff" stroke="none" />
        </svg>
      </div>
      <div className="ml-[4px] flex">
        {tasks.map((t, i) => (
          <TaskButton key={i} task={t} />
        ))}
      </div>
      <Tray />
    </footer>
  );
}

export default function App() {
  return (
    <div className="flex h-[1080px] w-[1920px] flex-col overflow-hidden bg-white font-['Open_Sans','Noto_Sans',sans-serif]">
      <TabStrip />
      <AddressBar />
      <Bookmarks />
      <div className="flex min-h-0 flex-1">
        <div className="flex-1">
          <SiteHeader />
          <MainMenu />
          <Dashboard />
        </div>
        <ScrollBar />
      </div>
      <Taskbar />
    </div>
  );
}
